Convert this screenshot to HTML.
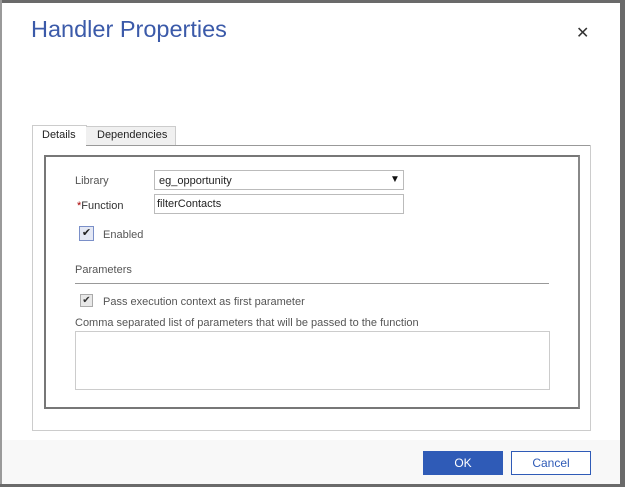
<!DOCTYPE html>
<html><head><style>
body{margin:0;width:625px;height:487px;overflow:hidden;background:#fff;font-family:"Liberation Sans",sans-serif;position:relative}
.a{position:absolute}
.t{font-size:11px;color:#444}
</style></head><body>
<div class="a" style="left:0;top:0;width:625px;height:3px;background:#6a6a6a"></div>
<div class="a" style="left:0;top:0;width:2px;height:487px;background:#9a9a9a"></div>
<div class="a" style="left:620px;top:0;width:5px;height:487px;background:#6a6a6a"></div>
<div class="a" style="left:0;top:484px;width:625px;height:3px;background:#6a6a6a"></div>
<div class="a" style="left:2px;top:440px;width:618px;height:44px;background:#f8f8f8"></div>
<div class="a" style="left:31px;top:16px;font-size:23.5px;color:#3b5aa9">Handler Properties</div>
<div class="a" style="left:576px;top:23px;font-size:16px;color:#333">✕</div>
<div class="a" style="left:32px;top:125px;width:53px;height:20px;border:1px solid #ccc;border-bottom:none;background:#fff"></div>
<div class="a t" style="left:42px;top:129px;color:#222">Details</div>
<div class="a" style="left:86px;top:126px;width:89px;height:18px;border:1px solid #ccc;border-left:none;background:#f0f0f0"></div>
<div class="a t" style="left:97px;top:129px;color:#222">Dependencies</div>
<div class="a" style="left:32px;top:145px;width:557px;height:285px;border:1px solid #ccc;border-top:none"></div>
<div class="a" style="left:86px;top:145px;width:504px;height:1px;background:#999"></div>
<div class="a" style="left:44px;top:155px;width:532px;height:250px;border:2px solid #777;border-right-color:#888"></div>
<div class="a t" style="left:75px;top:175px;color:#555">Library</div>
<div class="a" style="left:154px;top:170px;width:248px;height:18px;border:1px solid #bbb"></div>
<div class="a t" style="left:159px;top:175px;color:#222">eg_opportunity</div>
<div class="a" style="left:390px;top:174px;font-size:10px;color:#111">▼</div>
<div class="a t" style="left:77px;top:200px;color:#333"><span style="color:#a00">*</span>Function</div>
<div class="a" style="left:154px;top:194px;width:248px;height:18px;border:1px solid #bbb"></div>
<div class="a t" style="left:157px;top:198px;color:#222">filterContacts</div>
<div class="a" style="left:79px;top:226px;width:13px;height:13px;border:1px solid #7a8fc8;background:#e4e8f4;font-size:11px;line-height:13px;text-align:center;color:#222">✔</div>
<div class="a t" style="left:103px;top:229px;color:#555">Enabled</div>
<div class="a t" style="left:75px;top:264px;color:#555">Parameters</div>
<div class="a" style="left:75px;top:283px;width:474px;height:1px;background:#999"></div>
<div class="a" style="left:80px;top:294px;width:11px;height:11px;border:1px solid #aaa;background:#e8e8e8;font-size:10px;line-height:11px;text-align:center;color:#333">✔</div>
<div class="a t" style="left:103px;top:296px;color:#555">Pass execution context as first parameter</div>
<div class="a t" style="left:75px;top:317px;color:#555">Comma separated list of parameters that will be passed to the function</div>
<div class="a" style="left:75px;top:331px;width:473px;height:57px;border:1px solid #ccc"></div>
<div class="a" style="left:423px;top:451px;width:80px;height:24px;background:#2f5bb7;color:#fff;font-size:12px;text-align:center;line-height:24px">OK</div>
<div class="a" style="left:511px;top:451px;width:78px;height:22px;border:1px solid #2f5bb7;background:#fff;color:#2f5bb7;font-size:12px;text-align:center;line-height:22px">Cancel</div>
</body></html>
